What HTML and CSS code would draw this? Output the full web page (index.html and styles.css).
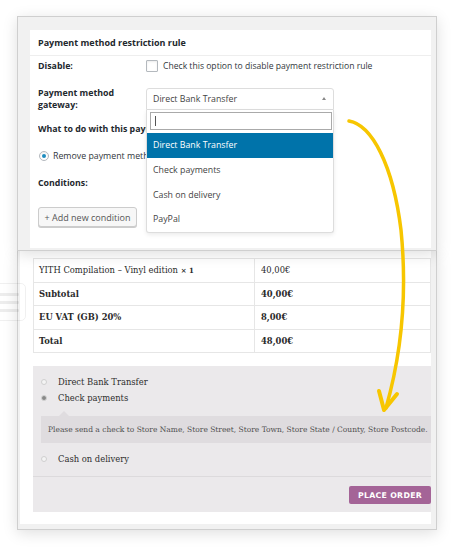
FILE: index.html
```html
<!DOCTYPE html>
<html>
<head>
<meta charset="utf-8">
<link rel="stylesheet" href="styles.css">
</head>
<body>
<div class="stage">
  <section class="panel panel-admin">
    <div class="rule-box">
      <h2 class="rule-title">Payment method restriction rule</h2>
      <div class="form-row row-disable">
        <div class="label">Disable:</div>
        <div class="field"><span class="checkbox"></span><span>Check this option to disable payment restriction rule</span></div>
      </div>
      <div class="form-row row-gateway">
        <div class="label">Payment method<br>gateway:</div>
        <div class="select-wrap">
          <div class="select">Direct Bank Transfer<span class="caret"></span></div>
          <div class="dropdown">
            <div class="search-wrap"><div class="search"><span class="cursor"></span></div></div>
            <ul class="options">
              <li class="active">Direct Bank Transfer</li>
              <li>Check payments</li>
              <li>Cash on delivery</li>
              <li>PayPal</li>
            </ul>
          </div>
        </div>
      </div>
      <div class="form-row row-what"><div class="label clip">What to do with this payment method?</div></div>
      <div class="form-row row-radio"><span class="radio"></span><span class="clip-text">Remove payment method from checkout</span></div>
      <div class="form-row row-cond"><div class="label">Conditions:</div></div>
      <div class="form-row row-btn"><button class="btn">+ Add new condition</button></div>
    </div>
  </section>

  <section class="panel panel-shop">
    <div class="shop-box">
      <table class="order-table">
        <tr><td class="c1">YITH Compilation – Vinyl edition <strong class="qty">× 1</strong></td><td class="c2">40,00€</td></tr>
        <tr><td class="c1"><strong>Subtotal</strong></td><td class="c2"><strong>40,00€</strong></td></tr>
        <tr><td class="c1"><strong>EU VAT (GB) 20%</strong></td><td class="c2"><strong>8,00€</strong></td></tr>
        <tr><td class="c1"><strong>Total</strong></td><td class="c2"><strong>48,00€</strong></td></tr>
      </table>
      <div class="payment">
        <ul class="methods">
          <li><span class="pradio"></span>Direct Bank Transfer</li>
          <li><span class="pradio on"></span>Check payments</li>
          <li class="desc">Please send a check to Store Name, Store Street, Store Town, Store State / County, Store Postcode.</li>
          <li><span class="pradio"></span>Cash on delivery</li>
        </ul>
        <div class="place">
          <button class="place-btn">PLACE ORDER</button>
        </div>
      </div>
    </div>
  </section>

  <div class="ghost-icon"><span></span><span></span><span></span></div>

  <svg class="arrow" width="454" height="553" viewBox="0 0 454 553">
    <path d="M349 121 C372 125 393 165 401 230 C407 290 402 352 386 408" fill="none" stroke="#f7c600" stroke-width="3.5" stroke-linecap="round"/>
    <path d="M379 391 L384 410 L397 394" fill="none" stroke="#f7c600" stroke-width="4" stroke-linecap="round" stroke-linejoin="round"/>
  </svg>
</div>
</body>
</html>
```

FILE: styles.css
```css
* { box-sizing: border-box; margin: 0; padding: 0; }
body { margin: 0; background: #fff; }
.stage { position: relative; width: 454px; height: 553px; padding: 16px 17px 0 17px; overflow: hidden; }

.panel { width: 420px; background: #f1f1f1; border: 1px solid #cfcfcf; box-shadow: 0 3px 14px rgba(0,0,0,0.13); }

/* ---------- admin panel ---------- */
.panel-admin { padding: 13px 5px 2px 12px; font-family: "Open Sans", sans-serif; color: #23282d; font-size: 8.8px; position: relative; z-index: 2; }
.rule-box { background: #fff; height: 218px; padding-left: 8px; }
.rule-title { font-size: 9px; font-weight: 700; height: 26px; line-height: 25px; border-bottom: 1px solid #eee; margin-left: -8px; padding-left: 8px; }
.form-row { display: flex; align-items: flex-start; }
.label { width: 108px; flex: none; font-weight: 700; line-height: 12px; }
.label.clip { white-space: nowrap; overflow: hidden; }
.clip-text { white-space: nowrap; overflow: hidden; width: 93px; }
.row-disable { height: 20px; align-items: center; }
.field { display: flex; align-items: center; color: #32373c; font-size: 8.6px; }
.checkbox { width: 12px; height: 12px; border: 1px solid #b4b9be; border-radius: 1px; background: #fff; box-shadow: inset 0 1px 2px rgba(0,0,0,0.08); margin-right: 5px; }
.row-gateway { margin-top: 12px; height: 24px; }
.row-gateway .label { margin-top: -1px; }
.select-wrap { position: relative; width: 188px; }
.select { height: 22px; border: 1px solid #ddd; border-radius: 3px 3px 0 0; background: #fff; padding-left: 6px; line-height: 20px; color: #444; position: relative; }
.caret { position: absolute; right: 7px; top: 8px; width: 0; height: 0; border-left: 2.5px solid transparent; border-right: 2.5px solid transparent; border-bottom: 3.5px solid #888; }
.dropdown { position: absolute; z-index: 5; left: 0; top: 22px; width: 188px; background: #fff; border: 1px solid #ddd; border-top: 0; border-radius: 0 0 3px 3px; box-shadow: 0 2px 4px rgba(0,0,0,0.08); }
.search-wrap { padding: 2px 1px 3px 3px; }
.search { height: 18px; border: 1px solid #aaa; background: #fff; position: relative; }
.cursor { position: absolute; left: 4px; top: 3px; width: 1px; height: 10px; background: #555; }
.options { list-style: none; }
.options li { height: 24.5px; line-height: 24.5px; padding-left: 6px; color: #444; }
.options li.active { background: #0073aa; color: #fff; height: 25px; line-height: 25px; }
.row-what { margin-top: 11px; }
.row-radio { margin-top: 15px; height: 12px; align-items: center; color: #32373c; }
.radio { flex: none; width: 10px; height: 10px; border-radius: 50%; border: 1px solid #b4b9be; background: #fff; margin-left: 1px; margin-right: 4px; position: relative; box-shadow: inset 0 1px 2px rgba(0,0,0,0.08); }
.radio::after { content: ""; position: absolute; left: 2px; top: 2px; width: 4px; height: 4px; border-radius: 50%; background: #1e8cbe; }
.row-cond { margin-top: 15px; }
.row-btn { margin-top: 18px; }
.btn { height: 20px; width: 99px; border: 1px solid #ccc; border-radius: 3px; background: #f7f7f7; box-shadow: 0 1px 0 #ccc; font-family: "Open Sans", sans-serif; font-size: 9px; color: #555; }

/* ---------- shop panel ---------- */
.panel-shop { border-top: 0; padding: 0 5px 5px 2px; font-family: "DejaVu Serif", serif; color: #2a2a2a; }
.shop-box { background: #fff; padding: 7px 0 12px 13px; }
.order-table { width: 100%; border-collapse: collapse; font-size: 8.4px; }
.order-table td { border: 1px solid #e6e6e6; height: 23.5px; padding: 0 0 0 5px; }
.order-table td.c1 { width: 221px; }
.order-table td.c2 { padding-left: 6px; }
.qty { font-size: 7px; }
.payment { margin-top: 13px; background: #ebe9eb; }
.methods { list-style: none; padding: 8px 0 9px 8px; border-bottom: 1px solid #dcdadc; font-size: 8.4px; color: #2e2e2e; }
.methods li { display: flex; align-items: center; height: 16px; }
.pradio { flex: none; width: 6px; height: 6px; border-radius: 50%; border: 1px solid #cfcfcf; background: #f4f4f4; margin-right: 11px; }
.pradio.on { background: #888; border-color: #d3d3d3; }
.methods li.desc { height: 27px; margin: 10px 0 8px 0; padding-left: 7px; background: #dfdcdf; font-size: 7.5px; color: #505050; position: relative; white-space: nowrap; }
.methods li.desc::before { content: ""; position: absolute; left: 18px; top: -5px; border-left: 5px solid transparent; border-right: 5px solid transparent; border-bottom: 5px solid #dfdcdf; }
.place { display: flex; justify-content: flex-end; padding: 9px 0 8px; }
.place-btn { width: 82px; height: 18px; border: 0; border-radius: 2px; background: #a46497; color: #fff; font-family: "DejaVu Sans", sans-serif; font-weight: 700; font-size: 7.8px; letter-spacing: 0.3px; }

/* decorative */
.ghost-icon { position: absolute; z-index: 3; left: -10px; top: 283px; width: 36px; height: 38px; border: 1px solid rgba(0,0,0,0.06); border-radius: 5px; display: flex; flex-direction: column; justify-content: center; gap: 5px; padding-left: 8px; }
.ghost-icon span { display: block; width: 20px; height: 3px; background: rgba(0,0,0,0.07); border-radius: 1px; }
.arrow { position: absolute; left: 0; top: 0; z-index: 10; pointer-events: none; }
```
